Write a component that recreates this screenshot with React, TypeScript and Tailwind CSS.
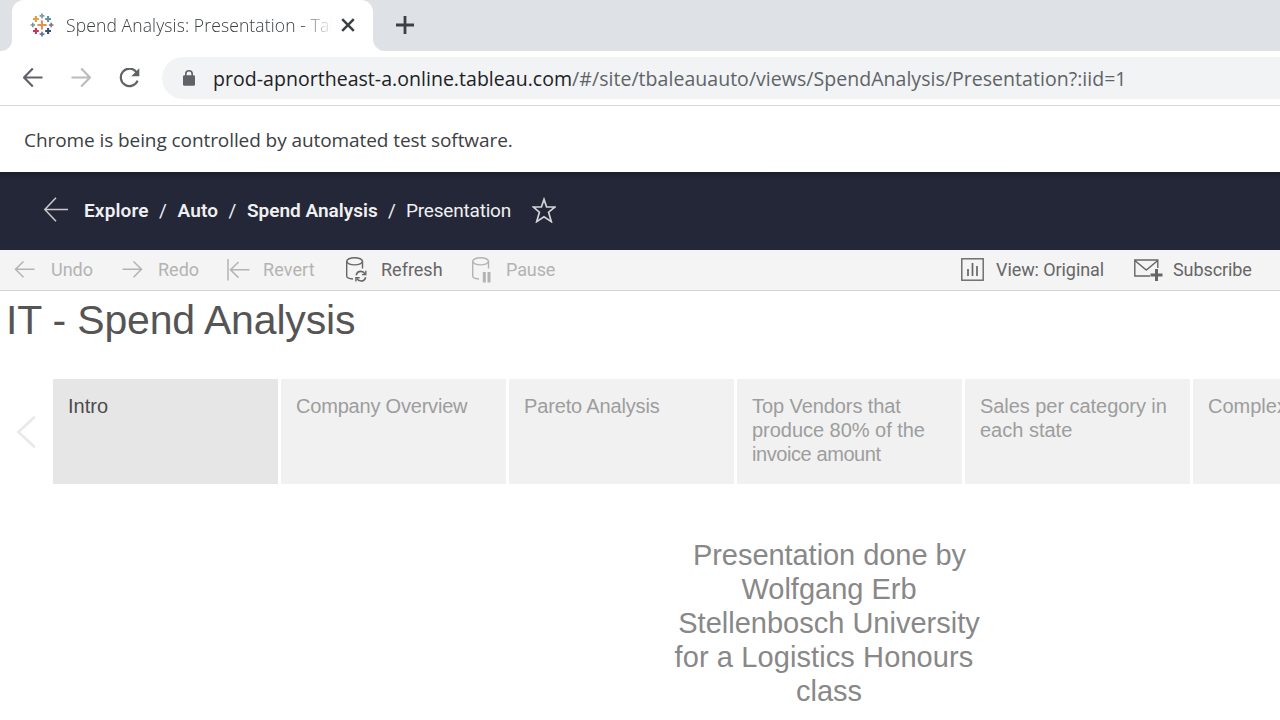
import React from "react";

const segoe = "font-['Open_Sans','Noto_Sans',sans-serif]";
const benton = "font-['Roboto','Inter',sans-serif]";
const arial = "font-['Liberation_Sans',Arial,sans-serif]";

const sparks: [number, number, number, number, string][] = [
  [12, 12, 4.6, 2, "#eb8f4e"],
  [12, 2.8, 2.4, 1.8, "#7c9aa8"],
  [12, 21.2, 2.4, 1.8, "#6f74a6"],
  [2.8, 12, 2.2, 1.6, "#6b9aa5"],
  [21.2, 12, 2.3, 1.6, "#7a7198"],
  [5.9, 6, 2.9, 2.1, "#eb9a3c"],
  [18.1, 6, 2.9, 2.1, "#5f929e"],
  [5.9, 18, 2.9, 2.1, "#cf3350"],
  [18.1, 18, 2.9, 2.1, "#2f5080"],
];

function TableauLogo() {
  return (
    <svg className="h-6 w-6 shrink-0" viewBox="0 0 24 24">
      {sparks.map(([x, y, r, w, c], i) => (
        <path key={i} d={`M${x - r} ${y}H${x + r}M${x} ${y - r}V${y + r}`} stroke={c} strokeWidth={w} fill="none" />
      ))}
    </svg>
  );
}

function Arrow({ className, flip }: { className: string; flip?: boolean }) {
  return (
    <svg className={className} viewBox="0 0 20 20" fill="none" stroke="currentColor">
      <path d={flip ? "M0.5 9.5H19M10.2 0.5L19 9.5L10.2 18.5" : "M19.5 9.5H1M9.8 0.5L1 9.5L9.8 18.5"} strokeWidth="2.2" />
    </svg>
  );
}

function ThinArrow({ flip, bar }: { flip?: boolean; bar?: boolean }) {
  if (bar) {
    return (
      <svg className="h-[22px] w-[23px] shrink-0" viewBox="0 0 23 22" fill="none" stroke="currentColor" strokeWidth="1.5">
        <path d="M1 0V21.5M22.5 10.8H4M11.5 3L3.5 10.8L11.5 18.6" />
      </svg>
    );
  }
  return (
    <svg className="h-[18px] w-[21px] shrink-0" viewBox="0 0 21 18" fill="none" stroke="currentColor" strokeWidth="1.5">
      <path d={flip ? "M0.5 8.3H19.5M11.5 0.5L19.5 8.3L11.5 16.3" : "M20.5 8.3H1.5M9.5 0.5L1.5 8.3L9.5 16.3"} />
    </svg>
  );
}

function Database({ kind }: { kind: "refresh" | "pause" }) {
  return (
    <svg className="h-[26px] w-[21px] shrink-0" viewBox="0 0 21 26" fill="none" stroke="currentColor" strokeWidth="1.4">
      <ellipse cx="8.6" cy="4.3" rx="7.9" ry="3.6" />
      <path d="M0.7 4.3V19C0.7 20.6 3 21.8 7 22M16.5 4.3V11.5" />
      {kind === "pause" ? (
        <path d="M12.3 15V25.5M17 15V25.5" strokeWidth="3" />
      ) : (
        <>
          <path d="M10.2 18.2C10.8 15.8 12.7 14.4 14.8 14.4C16.6 14.4 18 15.3 18.9 16.8M19.6 20.2C19 22.6 17.1 24 15 24C13.2 24 11.8 23.1 10.9 21.6" strokeWidth="1.6" />
          <path d="M19.8 13.8V17.6H16M9.9 24.6V20.8H13.7" strokeWidth="1.4" />
        </>
      )}
    </svg>
  );
}

function BrowserTabs() {
  return (
    <div className="flex h-[51px] bg-[#dee1e6]">
      <div className="w-3 bg-white">
        <div className="h-full rounded-br-[11px] bg-[#dee1e6]" />
      </div>
      <div className="flex h-[51px] w-[361px] items-center rounded-t-[12px] bg-white pb-[2px] pl-[18px]">
        <TableauLogo />
        <div className={`ml-3 h-7 w-[265px] overflow-hidden [mask-image:linear-gradient(to_right,black_235px,transparent_268px)] text-[17.5px] leading-7 font-light whitespace-nowrap text-[#3c4043] ${segoe}`}>
          <span className="tracking-[0.12px]">Spend Analysis: Presentation - Tableau</span>
        </div>
        <svg className="ml-[10px] h-[14px] w-[14px] shrink-0" viewBox="0 0 14 14" stroke="#3c4043" strokeWidth="2.5">
          <path d="M1.2 1.2L12.8 12.8M12.8 1.2L1.2 12.8" />
        </svg>
      </div>
      <div className="flex-1 bg-white">
        <div className="flex h-full items-center rounded-bl-[12px] bg-[#dee1e6] pl-[23px]">
          <svg className="-mt-px h-[18px] w-[18px]" viewBox="0 0 18 18" stroke="#3c4043" strokeWidth="2.8">
            <path d="M9 0V18M0 9H18" />
          </svg>
        </div>
      </div>
    </div>
  );
}

function AddressBar() {
  return (
    <div className="flex h-[55px] items-center border-b border-[#d5d7da] bg-white pl-[23px]">
      <Arrow className="h-5 w-5 shrink-0 text-[#5f6368]" />
      <Arrow flip className="ml-7 h-5 w-5 shrink-0 text-[#babcbe]" />
      <svg className="ml-[28px] h-[21px] w-[21px] shrink-0" viewBox="0 0 21 21" fill="none">
        <path d="M17.4 4A8.7 8.7 0 1 0 18.6 12.6" stroke="#5f6368" strokeWidth="2.2" />
        <path d="M20.3 0.3V8.3H12.3Z" fill="#5f6368" />
      </svg>
      <div className="ml-[22px] flex h-[42px] flex-1 items-center rounded-l-full bg-[#f1f3f4] pl-[21px]">
        <svg className="h-4 w-3 shrink-0" viewBox="0 0 12 16" fill="none">
          <rect x="0" y="5.2" width="12" height="10.6" rx="1.4" fill="#5f6368" />
          <path d="M2.8 6V4A3.2 3.2 0 0 1 9.2 4V6" stroke="#5f6368" strokeWidth="1.6" />
        </svg>
        <div className={`ml-[18px] flex pt-px text-[19.5px] leading-7 whitespace-nowrap ${segoe}`}>
          <span className="tracking-[0.04px] text-[#202124]">prod-apnortheast-a.online.tableau.com</span>
          <span className="tracking-[0.04px] text-[#5f6368]">/#/site/tbaleauauto/views/SpendAnalysis/Presentation?:iid=1</span>
        </div>
      </div>
    </div>
  );
}

function Breadcrumbs() {
  return (
    <nav className={`flex h-[78px] items-center bg-[#242738] bg-linear-to-b from-[#1b1d2a] from-0% to-[#242738] to-10% pl-[44px] text-[19px] leading-6 whitespace-nowrap text-[#f0f0f0] ${benton}`}>
      <svg className="-mt-[3px] h-[25px] w-6 shrink-0" viewBox="0 0 24 25" fill="none" stroke="#c9c9cd" strokeWidth="1.6">
        <path d="M24 12.5H1M12 0.8L0.8 12.5L12 24.2" />
      </svg>
      <span className="ml-4 w-[75px] font-semibold tracking-[0.15px]">Explore</span>
      <span className="w-[18.5px]">/</span>
      <span className="w-[51px] font-semibold tracking-[0.1px]">Auto</span>
      <span className="w-[18.5px]">/</span>
      <span className="w-[141px] font-semibold">Spend Analysis</span>
      <span className="w-[18px]">/</span>
      <span className="w-[126px] tracking-[-0.2px]">Presentation</span>
      <svg className="-mt-[3px] h-[26px] w-6 shrink-0" viewBox="0 0 24 26" fill="none" stroke="#d4d4d8" strokeWidth="1.7">
        <path d="M12 2.4L14.6 10H23L16.6 15.2L19.3 24.6L12 19.8L4.7 24.6L7.4 15.2L1.2 10H9.4Z" />
      </svg>
    </nav>
  );
}

function Toolbar() {
  return (
    <div className={`flex h-[41px] items-center border-b border-[#d4d4d4] bg-[#f4f4f4] pl-[14px] text-[18px] leading-6 whitespace-nowrap text-[#b3b3b3] ${benton}`}>
      <ThinArrow />
      <span className="ml-4 w-[71px]">Undo</span>
      <ThinArrow flip />
      <span className="ml-[15px] w-[69px]">Redo</span>
      <ThinArrow bar />
      <span className="ml-[13px] w-[83px] tracking-[0.1px]">Revert</span>
      <div className="flex items-center text-[#666]">
        <Database kind="refresh" />
        <span className="ml-[14px] w-[91px]">Refresh</span>
      </div>
      <Database kind="pause" />
      <span className="ml-[13px] tracking-[-0.1px]">Pause</span>
      <div className="ml-auto flex items-center pr-7 text-[#666]">
        <svg className="-mt-[2px] h-[23px] w-[23px]" viewBox="0 0 23 23" fill="none" stroke="currentColor" strokeWidth="1.4">
          <rect x="0.8" y="0.8" width="21.4" height="21.4" />
          <path d="M7 11V18M11.5 5V18M16 8V18" strokeWidth="1.7" />
        </svg>
        <span className="ml-3 w-[138px] tracking-[-0.08px]">View: Original</span>
        <svg className="h-[22px] w-[29px]" viewBox="0 0 29 22" fill="none" stroke="currentColor" strokeWidth="1.4">
          <path d="M16 17H0.8V1H23.8V9M0.8 1.5L12.3 11L23.8 1.5" />
          <path d="M22.5 10V22M16.5 16H28.5" strokeWidth="3" />
        </svg>
        <span className="ml-[10px] w-[79px] tracking-[-0.08px]">Subscribe</span>
      </div>
    </div>
  );
}

interface Line {
  text: string;
  spacing?: string;
}

const points: { lines: Line[]; active?: boolean }[] = [
  { lines: [{ text: "Intro" }], active: true },
  { lines: [{ text: "Company Overview", spacing: "tracking-[-0.2px]" }] },
  { lines: [{ text: "Pareto Analysis", spacing: "tracking-[-0.15px]" }] },
  {
    lines: [
      { text: "Top Vendors that", spacing: "tracking-[-0.08px]" },
      { text: "produce 80% of the", spacing: "tracking-[-0.03px]" },
      { text: "invoice amount", spacing: "tracking-[-0.42px]" },
    ],
  },
  { lines: [{ text: "Sales per category in", spacing: "tracking-[-0.05px]" }, { text: "each state" }] },
  { lines: [{ text: "Complexity" }] },
];

function Story() {
  return (
    <main className={`flex-1 ${arial}`}>
      <h1 className="h-[88px] pt-[5px] pl-[6px] text-[41px] leading-[48px] whitespace-nowrap text-[#555]">
        <span className="tracking-[-0.17px]">IT - Spend Analysis</span>
      </h1>
      <div className="flex h-[105px]">
        <div className="flex w-[53px] shrink-0 items-center pl-4">
          <svg className="h-8 w-5" viewBox="0 0 20 32" fill="none" stroke="#e9e9e9" strokeWidth="2.8" strokeLinecap="round">
            <path d="M18 1.5L2.4 16L18 30.5" />
          </svg>
        </div>
        <div className="flex gap-[3px]">
          {points.map((p) => (
            <div key={p.lines[0].text} className={`w-[225px] shrink-0 pt-[15px] pl-[15px] text-[20px] leading-6 whitespace-nowrap ${p.active ? "bg-[#e6e6e6] text-[#4b4b4b]" : "bg-[#f1f1f1] text-[#9d9d9d]"}`}>
              {p.lines.map((line) => (
                <div key={line.text} className={line.spacing}>{line.text}</div>
              ))}
            </div>
          ))}
        </div>
      </div>
      <div className="pt-[54px] pl-[378px] text-center text-[29px] leading-[34px] text-[#888]">
        <div className="pl-px tracking-[-0.05px]">Presentation done by</div>
        <div>Wolfgang Erb</div>
        <div>Stellenbosch University</div>
        <div className="pr-[10px] tracking-[0.1px]">for a Logistics Honours</div>
        <div>class</div>
      </div>
    </main>
  );
}

export default function App() {
  return (
    <div className="flex h-[720px] w-[1280px] flex-col overflow-hidden bg-white">
      <BrowserTabs />
      <AddressBar />
      <div className={`flex h-[66px] items-center bg-white pt-[2px] pl-6 text-[19px] text-[#3c4043] ${segoe}`}>
        <span className="tracking-[-0.08px]">Chrome is being controlled by automated test software.</span>
      </div>
      <Breadcrumbs />
      <Toolbar />
      <Story />
    </div>
  );
}
